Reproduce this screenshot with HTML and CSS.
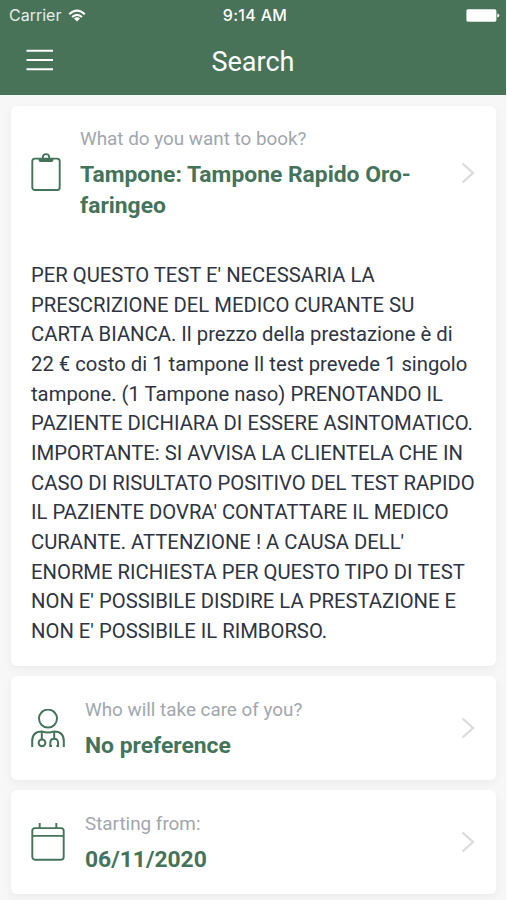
FILE: index.html
```html
<!DOCTYPE html>
<html lang="en">
<head>
  <meta charset="UTF-8">
  <title>Search</title>
  <link rel="stylesheet" href="styles.css">
</head>
<body>
  <div class="app">
    <header class="header">
      <div class="status">
        <div class="carrier">
          <span>Carrier</span>
          <svg width="18" height="13" viewBox="0 0 18 13" fill="none" stroke="#fff" stroke-width="2.2">
            <path d="M1.2 5.2Q9-1.8 16.8 5.2"/>
            <path d="M4.1 8Q9 3.6 13.9 8"/>
            <path d="M9 12.6L6 9.5Q9 7.1 12 9.5Z" fill="#fff" stroke="none"/>
          </svg>
        </div>
        <span class="time">9:14 AM</span>
        <div class="battery">
          <svg width="34" height="13" viewBox="0 0 34 13" fill="#fff">
            <rect x="0.4" y="0.3" width="30" height="12.4" rx="1.6"/>
            <path d="M31.3 4.4Q33.3 4.8 33.3 6.5T31.3 8.6Z"/>
          </svg>
        </div>
      </div>
      <div class="navbar">
        <button class="menu">
          <svg width="28" height="24" viewBox="0 0 28 24" stroke="#fff" stroke-width="2">
            <path d="M.5 2.7H27M.5 12H27M.5 21.3H27"/>
          </svg>
        </button>
        <h1>Search</h1>
      </div>
    </header>

    <main class="content">
      <section class="card card-service">
        <div class="row">
          <svg class="icon" width="30" height="39" viewBox="0 0 30 39" fill="none" stroke="#44735a" stroke-width="1.9">
            <rect x="1.3" y="5.6" width="27.4" height="31.4" rx="2.6"/>
            <path d="M7.6 5.8H22.4V7.1Q22.4 9 20.6 9H9.4Q7.6 9 7.6 7.1Z" fill="#44735a" stroke="none"/>
            <path d="M11.8 6.6V4.3A3.2 3.2 0 0 1 18.2 4.3V6.6"/>
          </svg>
          <div class="text">
            <p class="label">What do you want to book?</p>
            <p class="value">Tampone: Tampone Rapido Oro-<br>faringeo</p>
          </div>
          <svg class="arrow" width="14" height="22" viewBox="0 0 14 22" fill="none" stroke="#d9dadc" stroke-width="2.2">
            <path d="M1.5 1.5L12 11L1.5 20.5"/>
          </svg>
        </div>
        <p class="description">
          PER QUESTO TEST E' NECESSARIA LA<br>
          PRESCRIZIONE DEL MEDICO CURANTE SU<br>
          CARTA BIANCA. Il prezzo della prestazione è di<br>
          22 € costo di 1 tampone Il test prevede 1 singolo<br>
          tampone. (1 Tampone naso) PRENOTANDO IL<br>
          PAZIENTE DICHIARA DI ESSERE ASINTOMATICO.<br>
          IMPORTANTE: SI AVVISA LA CLIENTELA CHE IN<br>
          CASO DI RISULTATO POSITIVO DEL TEST RAPIDO<br>
          IL PAZIENTE DOVRA' CONTATTARE IL MEDICO<br>
          CURANTE. ATTENZIONE ! A CAUSA DELL'<br>
          ENORME RICHIESTA PER QUESTO TIPO DI TEST<br>
          NON E' POSSIBILE DISDIRE LA PRESTAZIONE E<br>
          NON E' POSSIBILE IL RIMBORSO.
        </p>
      </section>

      <section class="card">
        <div class="row">
          <svg class="icon" width="34" height="39" viewBox="0 0 34 39" fill="none" stroke="#44735a" stroke-width="2">
            <circle cx="17" cy="9.6" r="9"/>
            <path d="M1.2 38V32Q1.2 22.4 10.6 22.4Q17 24.8 23.4 22.4Q32.8 22.4 32.8 32V38"/>
            <path d="M10.8 23V30.4"/>
            <circle cx="11" cy="33.8" r="3.4"/>
            <path d="M23.2 23V30M21 37H19.3V34Q19.3 29.8 23.2 29.8T27.1 34V37H25.4"/>
          </svg>
          <div class="text">
            <p class="label">Who will take care of you?</p>
            <p class="value">No preference</p>
          </div>
          <svg class="arrow" width="14" height="22" viewBox="0 0 14 22" fill="none" stroke="#d9dadc" stroke-width="2.2">
            <path d="M1.5 1.5L12 11L1.5 20.5"/>
          </svg>
        </div>
      </section>

      <section class="card">
        <div class="row">
          <svg class="icon" width="34" height="39" viewBox="0 0 34 39" fill="none" stroke="#44735a" stroke-width="1.9">
            <rect x="1.3" y="5.1" width="31.4" height="31.6" rx="2.6"/>
            <path d="M1.3 12.9H32.7M8.7 0V5.2M25.3 0V5.2"/>
          </svg>
          <div class="text">
            <p class="label">Starting from:</p>
            <p class="value">06/11/2020</p>
          </div>
          <svg class="arrow" width="14" height="22" viewBox="0 0 14 22" fill="none" stroke="#d9dadc" stroke-width="2.2">
            <path d="M1.5 1.5L12 11L1.5 20.5"/>
          </svg>
        </div>
      </section>
    </main>
  </div>
</body>
</html>
```

FILE: styles.css
```css
* {
  box-sizing: border-box;
}

body {
  margin: 0;
  background-color: #fff;
  font-family: Roboto, sans-serif;
}

h1,
p {
  margin: 0;
}

.app {
  width: 506px;
  height: 900px;
  overflow: hidden;
  background-color: #f7f7f7;
}

.header {
  height: 95px;
  background-color: #487359;
  color: #fff;
}

.status {
  display: grid;
  grid-template-columns: 1fr auto 1fr;
  align-items: center;
  height: 30px;
  padding: 0 6px 0 9px;
  font-family: Inter, sans-serif;
  font-size: 16px;
}

.carrier {
  display: flex;
  align-items: center;
  gap: 7px;
  color: #e6eee6;
}

.time {
  padding-left: 1px;
  font-weight: 500;
  letter-spacing: 0.3px;
}

.battery {
  display: flex;
  justify-content: flex-end;
}

.navbar {
  display: grid;
  grid-template-columns: 80px 1fr 80px;
  align-items: center;
  height: 63px;
}

.menu {
  display: flex;
  padding: 0 0 4px 26px;
  border: 0;
  background: none;
}

.navbar h1 {
  font-size: 27px;
  font-weight: 400;
  text-align: center;
}

.content {
  display: flex;
  flex-direction: column;
  gap: 10px;
  padding: 11px 10px 0 11px;
}

.card {
  height: 104px;
  padding: 0 21px 0 20px;
  border-radius: 6px;
  background-color: #fff;
  box-shadow: 0 3px 10px rgba(0, 0, 0, 0.05);
}

.card-service {
  height: 560px;
}

.row {
  display: flex;
  align-items: center;
  height: 104px;
}

.card-service .row {
  height: 133px;
}

.icon {
  flex: none;
}

.text {
  flex: 1;
  margin-left: 20px;
  padding-bottom: 4px;
}

.card-service .text {
  margin-left: 19px;
}

.label {
  margin-bottom: 2px;
  color: #a2a6ad;
  font-size: 18.85px;
  line-height: 36px;
}

.value {
  color: #44735a;
  font-size: 22.85px;
  font-weight: 700;
  line-height: 31px;
  white-space: nowrap;
}

.description {
  padding-top: 22px;
  color: #2e3442;
  font-size: 20.25px;
  line-height: 29.67px;
  white-space: nowrap;
}
```
